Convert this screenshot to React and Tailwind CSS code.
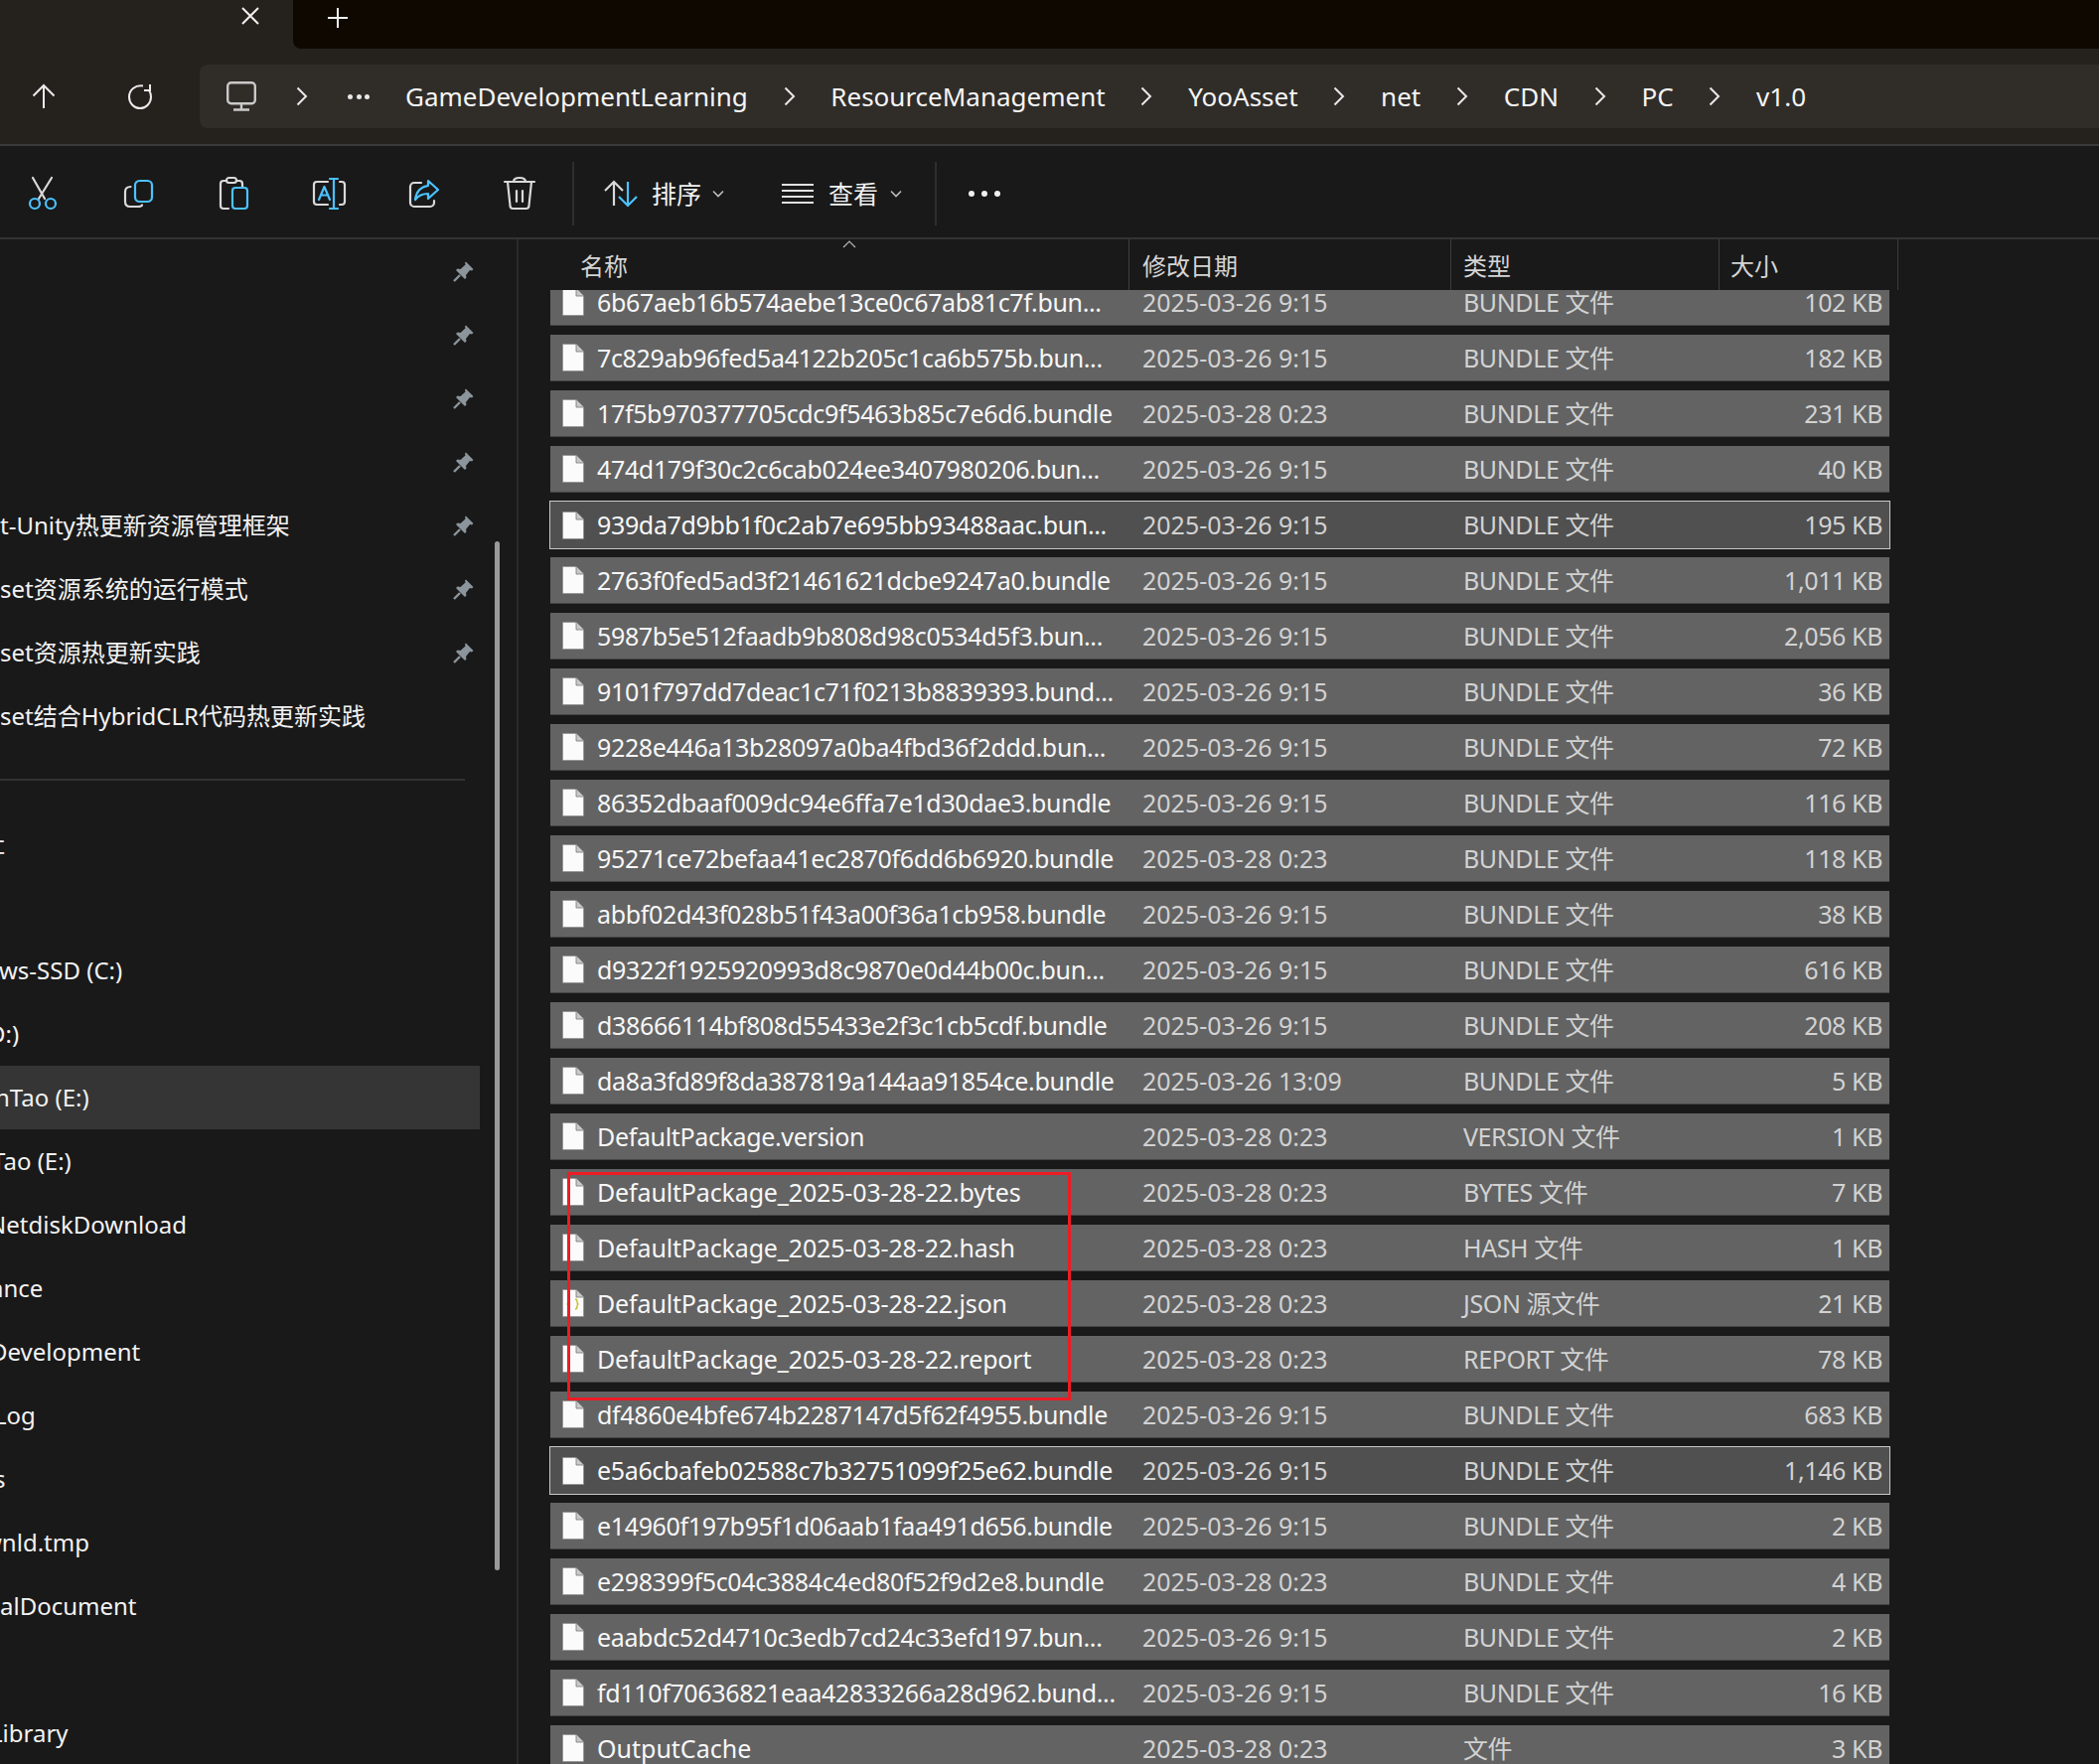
const FONT = { fontFamily: '"Noto Sans", "Noto Sans CJK SC", sans-serif' };

const files = [
  ["6b67aeb16b574aebe13ce0c67ab81c7f.bun...", "2025-03-26 9:15", "BUNDLE 文件", "102 KB"],
  ["7c829ab96fed5a4122b205c1ca6b575b.bun...", "2025-03-26 9:15", "BUNDLE 文件", "182 KB"],
  ["17f5b970377705cdc9f5463b85c7e6d6.bundle", "2025-03-28 0:23", "BUNDLE 文件", "231 KB"],
  ["474d179f30c2c6cab024ee3407980206.bun...", "2025-03-26 9:15", "BUNDLE 文件", "40 KB"],
  ["939da7d9bb1f0c2ab7e695bb93488aac.bun...", "2025-03-26 9:15", "BUNDLE 文件", "195 KB", "selected"],
  ["2763f0fed5ad3f21461621dcbe9247a0.bundle", "2025-03-26 9:15", "BUNDLE 文件", "1,011 KB"],
  ["5987b5e512faadb9b808d98c0534d5f3.bun...", "2025-03-26 9:15", "BUNDLE 文件", "2,056 KB"],
  ["9101f797dd7deac1c71f0213b8839393.bund...", "2025-03-26 9:15", "BUNDLE 文件", "36 KB"],
  ["9228e446a13b28097a0ba4fbd36f2ddd.bun...", "2025-03-26 9:15", "BUNDLE 文件", "72 KB"],
  ["86352dbaaf009dc94e6ffa7e1d30dae3.bundle", "2025-03-26 9:15", "BUNDLE 文件", "116 KB"],
  ["95271ce72befaa41ec2870f6dd6b6920.bundle", "2025-03-28 0:23", "BUNDLE 文件", "118 KB"],
  ["abbf02d43f028b51f43a00f36a1cb958.bundle", "2025-03-26 9:15", "BUNDLE 文件", "38 KB"],
  ["d9322f1925920993d8c9870e0d44b00c.bun...", "2025-03-26 9:15", "BUNDLE 文件", "616 KB"],
  ["d38666114bf808d55433e2f3c1cb5cdf.bundle", "2025-03-26 9:15", "BUNDLE 文件", "208 KB"],
  ["da8a3fd89f8da387819a144aa91854ce.bundle", "2025-03-26 13:09", "BUNDLE 文件", "5 KB"],
  ["DefaultPackage.version", "2025-03-28 0:23", "VERSION 文件", "1 KB"],
  ["DefaultPackage_2025-03-28-22.bytes", "2025-03-28 0:23", "BYTES 文件", "7 KB"],
  ["DefaultPackage_2025-03-28-22.hash", "2025-03-28 0:23", "HASH 文件", "1 KB"],
  ["DefaultPackage_2025-03-28-22.json", "2025-03-28 0:23", "JSON 源文件", "21 KB", "json"],
  ["DefaultPackage_2025-03-28-22.report", "2025-03-28 0:23", "REPORT 文件", "78 KB"],
  ["df4860e4bfe674b2287147d5f62f4955.bundle", "2025-03-26 9:15", "BUNDLE 文件", "683 KB"],
  ["e5a6cbafeb02588c7b32751099f25e62.bundle", "2025-03-26 9:15", "BUNDLE 文件", "1,146 KB", "selected"],
  ["e14960f197b95f1d06aab1faa491d656.bundle", "2025-03-26 9:15", "BUNDLE 文件", "2 KB"],
  ["e298399f5c04c3884c4ed80f52f9d2e8.bundle", "2025-03-28 0:23", "BUNDLE 文件", "4 KB"],
  ["eaabdc52d4710c3edb7cd24c33efd197.bun...", "2025-03-26 9:15", "BUNDLE 文件", "2 KB"],
  ["fd110f70636821eaa42833266a28d962.bund...", "2025-03-26 9:15", "BUNDLE 文件", "16 KB"],
  ["OutputCache", "2025-03-28 0:23", "文件", "3 KB"],
];

function FileIcon({ json }) {
  return (
    <svg width="22" height="28" viewBox="0 0 22 28" className="shrink-0">
      <path d="M0.5 0.5H14L21.5 8V27.5H0.5Z" fill="#fbfbfb" stroke="#8a8a8a" strokeWidth="0.6" />
      <path d="M14 0.5V8H21.5" fill="#c9c9c9" stroke="#777" strokeWidth="0.8" />
      {json && (
        <g fill="none" stroke="#c6c235" strokeWidth="1.4">
          <path d="M8 10c-2 0-2 1-2 2.5s0 2.5-1.5 2.5c1.5 0 1.5 1 1.5 2.5S6 20 8 20" />
          <path d="M13 10c2 0 2 1 2 2.5s0 2.5 1.5 2.5c-1.5 0-1.5 1-1.5 2.5S15 20 13 20" />
        </g>
      )}
    </svg>
  );
}

function Chevron({ color = "#e8e8e8" }) {
  return (
    <svg width="12" height="20" viewBox="0 0 12 20" fill="none" stroke={color} strokeWidth="2" className="shrink-0">
      <path d="M1.5 1.5L10 10L1.5 18.5" />
    </svg>
  );
}

function Pin() {
  return (
    <svg width="21" height="21" viewBox="0 0 21 21" className="shrink-0">
      <path d="M13 0.5L20.5 8L19 9.5L17 9L13 14L13.5 16.5L12 18L3 9L4.5 7.5L7.5 8L12.5 3.5L12 1.5Z" fill="#8b959b" />
      <path d="M7 14L1 20" stroke="#8b959b" strokeWidth="2.4" />
    </svg>
  );
}

const GREY = "#d9d9d9";
const BLUE = "#4cc2ff";

function ToolIcon({ children }) {
  return (
    <div className="flex h-full w-[96px] shrink-0 items-center justify-center">
      <svg width="36" height="36" viewBox="0 0 36 36" fill="none" strokeWidth="2.2" strokeLinecap="round" strokeLinejoin="round">
        {children}
      </svg>
    </div>
  );
}

function Toolbar() {
  return (
    <div className="flex h-[92px] shrink-0 items-center bg-[#191919] pt-[4px]">
      <div className="ml-[-5px] flex h-full shrink-0">
        <ToolIcon>
          <path d="M8 2L20 23M27 2L14 23" stroke={GREY} />
          <circle cx="10" cy="28" r="5" stroke={BLUE} />
          <circle cx="26" cy="28" r="5" stroke={BLUE} />
        </ToolIcon>
        <ToolIcon>
          <rect x="15" y="5" width="17" height="21" rx="4.5" stroke={BLUE} />
          <path d="M10.5 11C7 11 5 13 5 16V26C5 29 7 31 10 31H18C20 31 21.5 30.5 22 29.5" stroke={GREY} />
        </ToolIcon>
        <ToolIcon>
          <path d="M13 33H8A3 3 0 0 1 5 30V8A3 3 0 0 1 8 5H11M21 5H24A3 3 0 0 1 27 8V11" stroke={GREY} />
          <rect x="11" y="2" width="10" height="5" rx="2.5" stroke={GREY} />
          <rect x="17" y="12" width="15" height="21" rx="3" stroke={BLUE} />
        </ToolIcon>
        <ToolIcon>
          <path d="M17 6H6A3 3 0 0 0 3 9V26A3 3 0 0 0 6 29H17M29 6H31A3 3 0 0 1 34 9V26A3 3 0 0 1 31 29H29" stroke={GREY} />
          <path d="M23 3V33M19 3H27M19 33H27M8 24L13.5 11L19 24M10 19.5H17" stroke={BLUE} />
        </ToolIcon>
        <ToolIcon>
          <path d="M15 7H8A4 4 0 0 0 4 11V27A4 4 0 0 0 8 31H24A4 4 0 0 0 28 27V25" stroke={GREY} />
          <path d="M22 5L32 14L22 23V18C16 18 12 20 9 24C10 16 15 11 22 10Z" stroke={BLUE} />
        </ToolIcon>
        <ToolIcon>
          <path d="M3 6H33M12 6C12 3 14 2 18 2C22 2 24 3 24 6M6 6L8.5 30A3 3 0 0 0 11.5 33H24.5A3 3 0 0 0 27.5 30L30 6M15 15V26M21 15V26" stroke={GREY} />
        </ToolIcon>
      </div>
      <div className="ml-[5px] h-[64px] w-[2px] shrink-0 bg-[#2e2e2e]" />
      <svg width="34" height="28" viewBox="0 0 34 28" fill="none" strokeWidth="2.2" className="ml-[30px] shrink-0">
        <path d="M10 26V2M1 11L10 2L19 11" stroke={GREY} />
        <path d="M24 2V26M15 17L24 26L33 17" stroke={BLUE} />
      </svg>
      <span className="ml-[14px] text-[25px] leading-none text-[#f2f2f2]">排序</span>
      <svg width="12" height="8" viewBox="0 0 12 8" fill="none" stroke="#bdbdbd" strokeWidth="1.6" className="ml-[11px] shrink-0">
        <path d="M1 1.5L6 6.5L11 1.5" />
      </svg>
      <div className="ml-[58px] flex h-[20px] w-[32px] shrink-0 flex-col justify-between">
        <div className="h-[2px] bg-[#e0e0e0]" />
        <div className="h-[2px] bg-[#e0e0e0]" />
        <div className="h-[2px] bg-[#e0e0e0]" />
        <div className="h-[2px] bg-[#e0e0e0]" />
      </div>
      <span className="ml-[15px] text-[25px] leading-none text-[#f2f2f2]">查看</span>
      <svg width="12" height="8" viewBox="0 0 12 8" fill="none" stroke="#bdbdbd" strokeWidth="1.6" className="ml-[12px] shrink-0">
        <path d="M1 1.5L6 6.5L11 1.5" />
      </svg>
      <div className="ml-[33px] h-[64px] w-[2px] shrink-0 bg-[#2e2e2e]" />
      <div className="ml-[32px] flex w-[32px] shrink-0 justify-between">
        <div className="h-[6px] w-[6px] rounded-full bg-[#f0f0f0]" />
        <div className="h-[6px] w-[6px] rounded-full bg-[#f0f0f0]" />
        <div className="h-[6px] w-[6px] rounded-full bg-[#f0f0f0]" />
      </div>
    </div>
  );
}

function NavBar() {
  const crumbs = ["GameDevelopmentLearning", "ResourceManagement", "YooAsset", "net", "CDN", "PC", "v1.0"];
  return (
    <div className="flex h-[98px] shrink-0 items-center border-b-2 border-[#3a3a3a] bg-[#25221e]">
      <svg width="24" height="26" viewBox="0 0 24 26" fill="none" stroke="#ececec" strokeWidth="2" className="ml-[32px] shrink-0">
        <path d="M12 25V2M1.5 12.5L12 2L22.5 12.5" />
      </svg>
      <svg width="26" height="26" viewBox="0 0 26 26" fill="none" stroke="#ececec" strokeWidth="2" className="ml-[72px] shrink-0">
        <path d="M16 2.5C8 1.5 2 6.5 2 13.5C2 20 7 25 13 25C19 25 24 20 24 13.5C24 11 23.5 9 22 7M23 1V7H17" />
      </svg>
      <div className="ml-[47px] flex h-[64px] flex-1 items-center rounded-l-lg bg-[#302d29] pl-[27px] text-[26px] text-[#f5f5f5]">
        <svg width="30" height="30" viewBox="0 0 30 30" fill="none" stroke="#c9c9c9" strokeWidth="2.4" className="shrink-0">
          <rect x="1.2" y="1.2" width="27.6" height="21" rx="3.5" />
          <path d="M15 22V28M7 28.5H23" />
        </svg>
        <div className="ml-[40px]"><Chevron /></div>
        <div className="ml-[40px] flex w-[22px] shrink-0 justify-between">
          <div className="h-[5px] w-[5px] rounded-full bg-[#e8e8e8]" />
          <div className="h-[5px] w-[5px] rounded-full bg-[#e8e8e8]" />
          <div className="h-[5px] w-[5px] rounded-full bg-[#e8e8e8]" />
        </div>
        <div className="ml-[36px] flex items-center gap-[35.75px]">
          {crumbs.map((c, i) => (
            <div key={c} className="contents">
              {i > 0 && <Chevron />}
              <span className="whitespace-nowrap">{c}</span>
            </div>
          ))}
        </div>
      </div>
    </div>
  );
}

function SideRow({ children, pin, selected, cut }) {
  return (
    <div className={`flex h-[64px] w-[483px] items-center justify-between overflow-hidden pr-[6px] ${selected ? "bg-[#353535]" : ""}`}>
      <span className={`whitespace-nowrap ${cut || ""}`}>{children}</span>
      {pin && <Pin />}
    </div>
  );
}

function Sidebar() {
  return (
    <div className="relative w-[520px] shrink-0 text-[24px] text-[#f2f2f2]">
      <SideRow pin />
      <SideRow pin />
      <SideRow pin />
      <SideRow pin />
      <SideRow pin>t-Unity热更新资源管理框架</SideRow>
      <SideRow pin>set资源系统的运行模式</SideRow>
      <SideRow pin>set资源热更新实践</SideRow>
      <SideRow>set结合HybridCLR代码热更新实践</SideRow>
      <div className="flex h-[64px] items-center">
        <div className="h-[2px] w-[468px] bg-[#333333]" />
      </div>
      <SideRow cut="ml-[-19px]">址</SideRow>
      <SideRow />
      <SideRow cut="ml-[-1px]">ws-SSD (C:)</SideRow>
      <SideRow cut="ml-[-12px]">D:)</SideRow>
      <SideRow selected cut="ml-[-5px]">nTao (E:)</SideRow>
      <SideRow cut="ml-[-8px]">Tao (E:)</SideRow>
      <SideRow cut="ml-[-12px]">NetdiskDownload</SideRow>
      <SideRow cut="ml-[-10px]">ance</SideRow>
      <SideRow cut="ml-[-10px]">Development</SideRow>
      <SideRow cut="ml-[-6px]">Log</SideRow>
      <SideRow cut="ml-[-6px]">s</SideRow>
      <SideRow cut="ml-[-17px]">wnld.tmp</SideRow>
      <SideRow>alDocument</SideRow>
      <SideRow />
      <SideRow cut="ml-[-10px]">Library</SideRow>
      <div className="absolute left-[498px] top-[304px] h-[1036px] w-[5px] rounded-full bg-[#9a9a9a]" />
    </div>
  );
}

function Header() {
  return (
    <div className="relative flex h-[51px] shrink-0 items-center text-[24px] leading-none text-[#d4d4d4]">
      <div className="flex h-full w-[615px] shrink-0 items-center border-r border-[#3d3d3d] pl-[62px] pt-[3px]">名称</div>
      <div className="flex h-full w-[324px] shrink-0 items-center border-r border-[#3d3d3d] pl-[13px] pt-[3px]">修改日期</div>
      <div className="flex h-full w-[270px] shrink-0 items-center border-r border-[#3d3d3d] pl-[12px] pt-[3px]">类型</div>
      <div className="flex h-full w-[180px] shrink-0 items-center border-r border-[#3d3d3d] pl-[11px] pt-[3px]">大小</div>
      <svg width="14" height="8" viewBox="0 0 14 8" fill="none" stroke="#b5b5b5" strokeWidth="1.2" className="absolute left-[326px] top-[1px]">
        <path d="M1 7L7 1L13 7" />
      </svg>
    </div>
  );
}

function nameTracking(name) {
  if (name.startsWith("DefaultPackage_")) return "tracking-[-0.15px]";
  if (name === "OutputCache") return "";
  return "tracking-[-0.35px]";
}

function Row({ name, date, type, size, flag }) {
  const selected = flag === "selected";
  return (
    <div
      className={`flex h-[47px] w-[1348px] shrink-0 items-center whitespace-nowrap pl-[12px] pr-[7px] text-[25px] leading-none ${
        selected ? "bg-[#505050] outline outline-[#c8c8c8]" : "border-b border-[#454545] bg-[#636363]"
      }`}
    >
      <FileIcon json={flag === "json"} />
      <div className={`ml-[13px] w-[549px] shrink-0 text-[#f7f7f7] ${nameTracking(name)}`}>{name}</div>
      <div className="w-[323px] shrink-0 text-[#d2d2d2]">{date}</div>
      <div className="flex-1 tracking-[-0.4px] text-[#d2d2d2]">{type}</div>
      <div className="tracking-[-0.4px] text-[#d2d2d2]">{size}</div>
    </div>
  );
}

export default function App() {
  return (
    <div className="flex h-[1776px] w-[2113px] flex-col overflow-hidden bg-[#191919]" style={FONT}>
      <div className="flex h-[49px] shrink-0 bg-[#25221e]">
        <div className="flex w-[295px] shrink-0 justify-end pr-[34px] pt-[7px]">
          <svg width="18" height="18" viewBox="0 0 18 18" stroke="#f0f0f0" strokeWidth="2">
            <path d="M1 1L17 17M17 1L1 17" />
          </svg>
        </div>
        <div className="flex-1 rounded-bl-lg bg-[#0f0800] pl-[35px] pt-[8px]">
          <svg width="20" height="20" viewBox="0 0 20 20" stroke="#f0f0f0" strokeWidth="2">
            <path d="M10 0V20M0 10H20" />
          </svg>
        </div>
      </div>
      <NavBar />
      <Toolbar />
      <div className="flex min-h-0 flex-1 border-t-2 border-[#333333]">
        <Sidebar />
        <div className="w-[2px] shrink-0 bg-[#2a2a2a]" />
        <div className="relative flex min-w-0 flex-1 flex-col">
          <Header />
          <div className="min-h-0 flex-1 overflow-hidden pl-[32px]">
            <div className="mt-[-11px] flex flex-col gap-[9px]">
              {files.map((f) => (
                <Row key={f[0]} name={f[0]} date={f[1]} type={f[2]} size={f[3]} flag={f[4]} />
              ))}
            </div>
          </div>
          <div className="absolute left-[49px] top-[939px] h-[230px] w-[507px] border-[3px] border-[#ed1c24]" />
        </div>
      </div>
    </div>
  );
}
